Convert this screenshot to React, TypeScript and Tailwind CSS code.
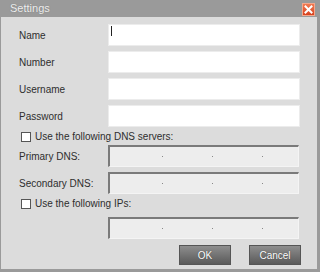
import React from 'react';

const font = { fontFamily: '"Liberation Sans", Arial, sans-serif' };

function TextRow({ label, cursor }: { label: string; cursor?: boolean }) {
  return (
    <div className="flex items-center h-[22px]">
      <span className="w-[89px] text-[10px] text-[#2e2e2e]">{label}</span>
      <div className="relative w-[192px] h-[22px] bg-white border border-[#ececec]">
        {cursor && <span className="absolute left-[2px] top-[1px] w-[1px] h-[10px] bg-[#222]" />}
      </div>
    </div>
  );
}

function IpField() {
  return (
    <div className="flex items-center w-[191px] h-[22px] bg-[#ededed] border-t-2 border-l-2 border-[#7a7a7a] border-b border-r border-b-[#f4f4f4] border-r-[#f4f4f4]">
      <span className="ml-[52px] w-[1px] h-[1px] bg-[#888]" />
      <span className="ml-[49px] w-[1px] h-[1px] bg-[#888]" />
      <span className="ml-[49px] w-[1px] h-[1px] bg-[#888]" />
    </div>
  );
}

function Check({ label }: { label: string }) {
  return (
    <div className="flex items-center h-[17px] pl-[2px]">
      <span className="w-[10px] h-[10px] bg-white border border-[#555]" />
      <span className="ml-[4px] text-[10px] text-[#2e2e2e]">{label}</span>
    </div>
  );
}

function Btn({ label }: { label: string }) {
  return (
    <button className="w-[52px] h-[20px] text-[10px] text-white border border-[#555] bg-gradient-to-b from-[#8e8e8e] to-[#5a5a5a] [text-shadow:0_0_1px_#333]">
      {label}
    </button>
  );
}

export default function App() {
  return (
    <div className="w-[320px] h-[272px] bg-[#9a9a9a] flex flex-col" style={font}>
      <div className="h-[17px] flex items-center justify-between pl-[10px] pr-[5px]">
        <span className="text-[11px] text-[#eeeeee] [text-shadow:0_0_1px_#777]">Settings</span>
        <span className="w-[13px] h-[13px] mt-[1px] flex items-center justify-center bg-gradient-to-b from-[#f07a52] to-[#d6401c] border border-[#f3a78c]">
          <svg width="9" height="9" viewBox="0 0 9 9">
            <path d="M1.5 1.5 L7.5 7.5 M7.5 1.5 L1.5 7.5" stroke="white" strokeWidth="2" strokeLinecap="square" />
          </svg>
        </span>
      </div>
      <div className="flex-1 ml-[1px] mr-[3px] mb-[3px] bg-[#dcdcdc] pl-[18px] pt-[7px]">
        <div className="flex flex-col gap-[5px]">
          <TextRow label="Name" cursor />
          <TextRow label="Number" />
          <TextRow label="Username" />
          <TextRow label="Password" />
        </div>
        <div className="mt-[1px]">
          <Check label="Use the following DNS servers:" />
        </div>
        <div className="flex flex-col gap-[5px]">
          <div className="flex items-center">
            <span className="w-[89px] text-[10px] text-[#2e2e2e]">Primary DNS:</span>
            <IpField />
          </div>
          <div className="flex items-center">
            <span className="w-[89px] text-[10px] text-[#2e2e2e]">Secondary DNS:</span>
            <IpField />
          </div>
        </div>
        <div className="mt-[1px]">
          <Check label="Use the following IPs:" />
        </div>
        <div className="mt-[5px] pl-[89px]">
          <IpField />
        </div>
        <div className="mt-[6px] flex justify-end gap-[18px] pr-[16px]">
          <Btn label="OK" />
          <Btn label="Cancel" />
        </div>
      </div>
    </div>
  );
}
